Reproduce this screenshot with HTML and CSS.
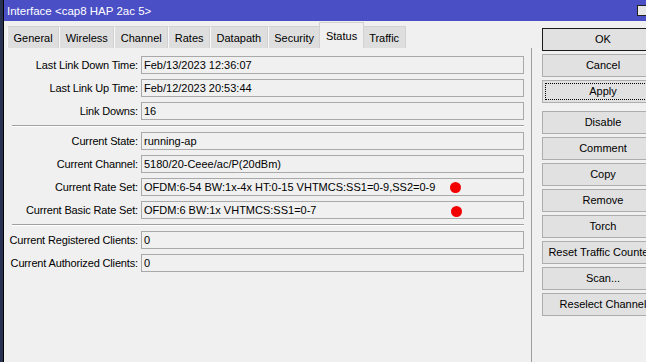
FILE: index.html
```html
<html>
    <head>
        <meta name="viewport" content="width=device-width, initial-scale=1">
        <link rel="stylesheet" href="styles.css">
    </head>
    <body>
        <div class="screen">
            <div class="edge"></div>
            <div class="window">
                <div class="titlebar">
                    <span>Interface &lt;cap8 HAP 2ac 5&gt;</span>
                    <span class="maxbox"></span>
                </div>
                <div class="main">
                    <div class="pane">
                        <div class="tabs">
                            <span class="tab">General</span>
                            <span class="tab">Wireless</span>
                            <span class="tab">Channel</span>
                            <span class="tab">Rates</span>
                            <span class="tab">Datapath</span>
                            <span class="tab">Security</span>
                            <span class="tab active">Status</span>
                            <span class="tab">Traffic</span>
                        </div>
                        <div class="panel">
                            <div class="row"><label>Last Link Down Time:</label><div class="field">Feb/13/2023 12:36:07</div></div>
                            <div class="row"><label>Last Link Up Time:</label><div class="field">Feb/12/2023 20:53:44</div></div>
                            <div class="row"><label>Link Downs:</label><div class="field">16</div></div>
                            <div class="sep"></div>
                            <div class="row"><label>Current State:</label><div class="field">running-ap</div></div>
                            <div class="row"><label>Current Channel:</label><div class="field">5180/20-Ceee/ac/P(20dBm)</div></div>
                            <div class="row"><label>Current Rate Set:</label><div class="field">OFDM:6-54 BW:1x-4x HT:0-15 VHTMCS:SS1=0-9,SS2=0-9<span class="dot"></span></div></div>
                            <div class="row"><label>Current Basic Rate Set:</label><div class="field">OFDM:6 BW:1x VHTMCS:SS1=0-7<span class="dot low"></span></div></div>
                            <div class="sep"></div>
                            <div class="row"><label>Current Registered Clients:</label><div class="field">0</div></div>
                            <div class="row"><label>Current Authorized Clients:</label><div class="field">0</div></div>
                        </div>
                    </div>
                    <div class="buttons">
                        <div class="btn default">OK</div>
                        <div class="btn">Cancel</div>
                        <div class="btn focus">Apply</div>
                        <div class="btn spaced">Disable</div>
                        <div class="btn">Comment</div>
                        <div class="btn">Copy</div>
                        <div class="btn">Remove</div>
                        <div class="btn">Torch</div>
                        <div class="btn">Reset Traffic Counters</div>
                        <div class="btn">Scan...</div>
                        <div class="btn">Reselect Channel</div>
                    </div>
                </div>
            </div>
        </div>
    </body>
</html>
```
FILE: styles.css
```css
body{
    margin: 0; background: #f0f0f0; overflow: hidden;
    font-family: "Liberation Sans", Arial, sans-serif; font-size: 11px; color: #000;
}
.screen{
    display: flex; height: 362px; width: 646px; overflow: hidden;
}
.edge{
    width: 3px; background: #26324f; flex: none;
}
.window{
    flex: 1; border-left: 1px solid #000; display: flex; flex-direction: column; min-width: 0;
}
.titlebar{
    height: 21px; background: #4a4fc6; color: #fff; font-size: 11.5px;
    display: flex; align-items: center; justify-content: space-between; padding-left: 3px;
}
.maxbox{
    width: 8px; height: 9px; border: 1px solid #222; border-right: none;
    background: #e6e6e6; margin-bottom: 1px;
}
.main{
    display: flex; flex: 1;
}
.pane{
    width: 528px; flex: none; display: flex; flex-direction: column;
}
.tabs{
    height: 27px; display: flex; align-items: flex-end; padding-left: 3px;
}
.tab{
    height: 21px; line-height: 22px; padding: 0 5.5px; background: #dedede;
    border: 1px solid #d2d2d2; border-bottom: none; border-left-color: #f8f8f8;
}
.tab.active{
    height: 25px; line-height: 26px; background: #f0f0f0; border-color: #d2d2d2;
    margin: 0 -1px; position: relative;
}
.panel{
    flex: 1; border-right: 1px solid #a0a0a0; padding-top: 8px;
}
.row{
    display: flex; height: 18px; margin-bottom: 5px;
}
.row label{
    width: 134px; margin-right: 3px; text-align: right; line-height: 18px; white-space: nowrap;
    letter-spacing: -0.15px;
}
.field{
    width: 383px; box-sizing: border-box; border: 1px solid #a9a9a9; background: #f0f0f0;
    line-height: 16px; padding-left: 2px; position: relative; white-space: nowrap;
}
.dot{
    position: absolute; left: 308px; top: 3px; width: 11px; height: 11px;
    border-radius: 50%; background: #f20000;
}
.dot.low{
    top: 4px; left: 309px;
}
.sep{
    margin: 3px 0 5px 8px; width: 512px; border-top: 1px solid #a0a0a0; border-bottom: 1px solid #fff;
}
.buttons{
    padding: 7px 0 0 10px; display: flex; flex-direction: column;
}
.btn{
    width: 122px; height: 23px; box-sizing: border-box; flex: none;
    border: 1px solid #adadad; background: #e1e1e1;
    text-align: center; line-height: 21px; margin-bottom: 3px; white-space: nowrap; overflow: hidden;
    position: relative;
}
.btn.default{
    border-color: #1a1a1a;
}
.btn.focus::after{
    content: ""; position: absolute; left: 2px; top: 2px; right: 2px; bottom: 2px;
    border: 1px dotted #000;
}
.btn.spaced{
    margin-top: 5px;
}
```
